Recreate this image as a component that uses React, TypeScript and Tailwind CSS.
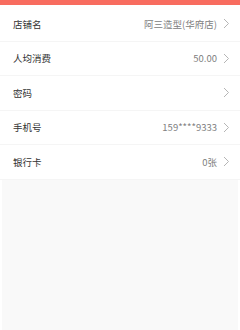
import React from 'react';

const rows = [
  { label: '店铺名', value: '阿三造型(华府店)' },
  { label: '人均消费', value: '50.00' },
  { label: '密码', value: '' },
  { label: '手机号', value: '159****9333' },
  { label: '银行卡', value: '0张' },
];

const Chevron = () => (
  <svg width="7" height="11" viewBox="0 0 7 11" className="shrink-0">
    <path d="M1 1l4.5 4.5L1 10" fill="none" stroke="#b5b5b5" strokeWidth="1" />
  </svg>
);

export default function App() {
  return (
    <div
      className="w-[240px] h-[330px] bg-white flex flex-col overflow-hidden"
      style={{ fontFamily: '"Noto Sans CJK SC", "Noto Sans", sans-serif' }}
    >
      {/* top accent */}
      <div className="h-[5px] bg-[#f86c5f] shrink-0"></div>

      <div className="pt-[2px] flex flex-col">
        {rows.map((r) => (
          <div
            key={r.label}
            className="h-[34.5px] flex items-center justify-between pl-[13px] pr-[10px] border-b border-[#f5f5f5]"
          >
            <span className="text-[9.5px] text-[#333]">{r.label}</span>
            <div className="flex items-center gap-[6px]">
              <span className="text-[9.5px] text-[#808080]">{r.value}</span>
              <Chevron />
            </div>
          </div>
        ))}
      </div>

      {/* empty area */}
      <div className="flex-1 px-[2px] bg-white">
        <div className="h-full bg-[#f9f9f9]"></div>
      </div>
    </div>
  );
}
